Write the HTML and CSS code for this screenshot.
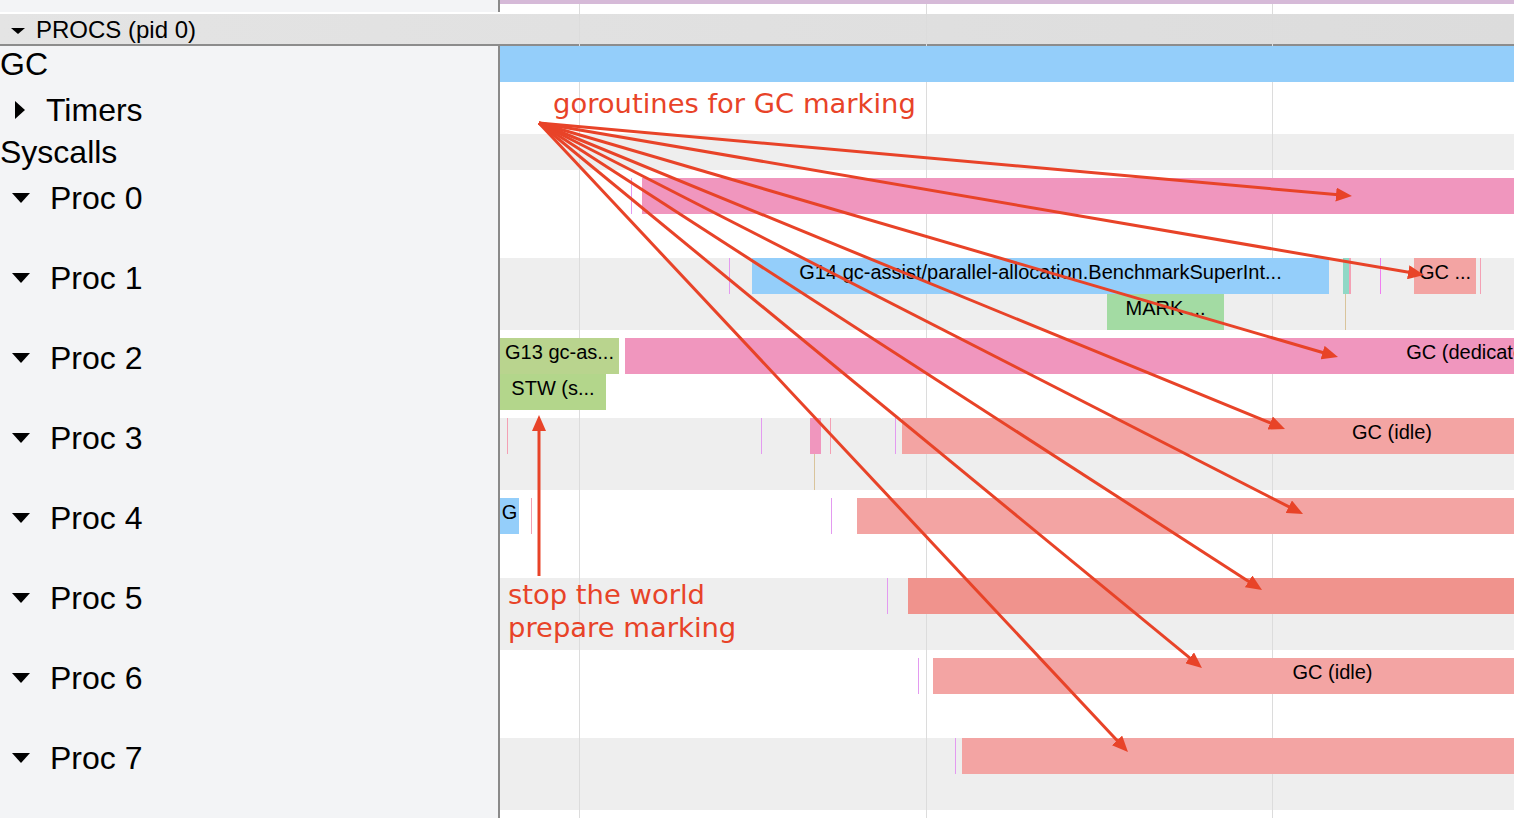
FILE: index.html
```html
<!DOCTYPE html>
<html>
<head>
<meta charset="utf-8">
<link rel="stylesheet" href="styles.css">
</head>
<body>
<div class="app">
  <div class="topstrip"><div class="ts-left"></div><div class="ts-right"></div></div>
  <div class="header"><span class="tri-hdr"></span><span class="hdr-text">PROCS (pid 0)</span></div>
  <div class="main">
    <div class="labels">
      <div class="lab lab-gc"><span class="txt">GC</span></div>
      <div class="lab lab-timers"><span class="tri-right"></span><span class="txt">Timers</span></div>
      <div class="lab lab-sys"><span class="txt">Syscalls</span></div>
      <div class="lab-proc"><div class="lab"><span class="tri-down"></span><span class="txt">Proc 0</span></div></div>
      <div class="lab-proc"><div class="lab"><span class="tri-down"></span><span class="txt">Proc 1</span></div></div>
      <div class="lab-proc"><div class="lab"><span class="tri-down"></span><span class="txt">Proc 2</span></div></div>
      <div class="lab-proc"><div class="lab"><span class="tri-down"></span><span class="txt">Proc 3</span></div></div>
      <div class="lab-proc"><div class="lab"><span class="tri-down"></span><span class="txt">Proc 4</span></div></div>
      <div class="lab-proc"><div class="lab"><span class="tri-down"></span><span class="txt">Proc 5</span></div></div>
      <div class="lab-proc"><div class="lab"><span class="tri-down"></span><span class="txt">Proc 6</span></div></div>
      <div class="lab-proc"><div class="lab"><span class="tri-down"></span><span class="txt">Proc 7</span></div></div>
    </div>
    <div class="tracks">
      <div class="trk trk-gc"><div class="s blue" style="left:0;width:1014px"></div></div>
      <div class="trk trk-timers"></div>
      <div class="trk trk-sys"></div>

      <div class="proc"><div class="band">
        <div class="tick violet" style="left:131px"></div>
        <div class="s pink" style="left:142px;width:1000px"></div>
      </div></div>

      <div class="proc"><div class="band gray">
        <div class="tick violet" style="left:229px"></div>
        <div class="s blue" style="left:252px;width:577px">G14 gc-assist/parallel-allocation.BenchmarkSuperInt...</div>
        <div class="s teal" style="left:843px;width:6px"></div>
        <div class="tick pinkt w2" style="left:849px"></div>
        <div class="tick tan lo" style="left:845px"></div>
        <div class="tick magenta" style="left:880px"></div>
        <div class="s salmon" style="left:914px;width:62px">GC ...</div>
        <div class="tick pinkt" style="left:980px"></div>
        <div class="s green lo" style="left:607px;width:117px">MARK ...</div>
      </div></div>

      <div class="proc"><div class="band">
        <div class="s olive" style="left:0;width:119px">G13 gc-as...</div>
        <div class="s pink" style="left:125px;width:1698px">GC (dedicated)</div>
        <div class="s olive2 lo" style="left:0;width:106px">STW (s...</div>
      </div></div>

      <div class="proc"><div class="band gray">
        <div class="tick pinkt" style="left:7px"></div>
        <div class="tick violet" style="left:261px"></div>
        <div class="s pink" style="left:310px;width:11px"></div>
        <div class="tick tan lo" style="left:314px"></div>
        <div class="tick pinkt" style="left:330px"></div>
        <div class="tick violet" style="left:395px"></div>
        <div class="s salmon" style="left:402px;width:980px">GC (idle)</div>
      </div></div>

      <div class="proc"><div class="band">
        <div class="s blue" style="left:0;width:19px">G</div>
        <div class="tick pinkt" style="left:31px"></div>
        <div class="tick violet" style="left:331px"></div>
        <div class="s salmon" style="left:357px;width:1200px"></div>
      </div></div>

      <div class="proc"><div class="band gray">
        <div class="tick violet" style="left:387px"></div>
        <div class="s salmon2" style="left:408px;width:1200px"></div>
      </div></div>

      <div class="proc"><div class="band">
        <div class="tick violet" style="left:418px"></div>
        <div class="s salmon" style="left:433px;width:799px">GC (idle)</div>
      </div></div>

      <div class="proc"><div class="band gray">
        <div class="tick violet" style="left:455px"></div>
        <div class="s salmon" style="left:462px;width:1200px"></div>
      </div></div>
    </div>
  </div>

  <div class="grid"><i class="g1"></i><i class="g2"></i><i class="g3"></i></div>

  <svg class="arrows" width="1514" height="818" viewBox="0 0 1514 818">
    <defs>
      <marker id="ah" markerUnits="userSpaceOnUse" markerWidth="16" markerHeight="14" viewBox="0 0 16 14" refX="8" refY="7" orient="auto">
        <path d="M0,0 L16,7 L0,14 Z" fill="#e84328"/>
      </marker>
    </defs>
    <g stroke="#e84328" stroke-width="3" fill="none" marker-end="url(#ah)">
      <line x1="539" y1="123" x2="1344" y2="195.3"/>
      <line x1="539" y1="123" x2="1416.1" y2="273.6"/>
      <line x1="539" y1="123" x2="1330.3" y2="354.8"/>
      <line x1="539" y1="123" x2="1277.6" y2="426"/>
      <line x1="539" y1="123" x2="1295.9" y2="510.4"/>
      <line x1="539" y1="123" x2="1255.3" y2="585.7"/>
      <line x1="539" y1="123" x2="1195.8" y2="662.9"/>
      <line x1="539" y1="123" x2="1122.5" y2="746.2"/>
      <line x1="539" y1="576" x2="539" y2="423"/>
    </g>
  </svg>

  <div class="note note-gc">goroutines for GC marking</div>
  <div class="note note-stw">stop the world<br>prepare marking</div>
</div>
</body>
</html>
```

FILE: styles.css
```css
body {
  margin: 0;
  background: #ffffff;
  font-family: "Liberation Sans", Arial, Helvetica, sans-serif;
  color: #000;
}

.app {
  position: relative;
  width: 1514px;
  height: 818px;
  overflow: hidden;
}

.topstrip {
  display: flex;
  height: 12px;
  margin-bottom: 2px;
}
.ts-left {
  width: 498px;
  border-right: 2px solid #8a8a8a;
  background: #f3f4f6;
}
.ts-right {
  flex: 1;
  border-top: 4px solid #d6bad8;
  background: #ffffff;
}

.header {
  height: 30px;
  border-bottom: 2px solid #8c8c8c;
  background: linear-gradient(to right, #e4e4e4, #dcdcdc);
  display: flex;
  align-items: center;
  font-size: 24px;
}
.hdr-text {
  padding-top: 2px;
}
.tri-hdr {
  width: 0;
  height: 0;
  border-left: 7px solid transparent;
  border-right: 7px solid transparent;
  border-top: 6px solid #000;
  margin: 4px 11px 0 11px;
}

.main {
  display: flex;
  height: 772px;
}

.labels {
  width: 498px;
  border-right: 2px solid #8a8a8a;
  background: #f3f4f6;
  font-size: 32px;
}
.lab {
  display: flex;
  align-items: center;
  height: 36px;
}
.lab .txt {
  line-height: 36px;
  white-space: nowrap;
}
.lab-timers {
  height: 52px;
  padding-top: 3px;
  box-sizing: border-box;
}
.lab-proc .txt {
  padding-top: 3px;
}
.tri-right {
  width: 0;
  height: 0;
  border-top: 9px solid transparent;
  border-bottom: 9px solid transparent;
  border-left: 10px solid #000;
  margin: 0 21px 0 15px;
}
.lab-proc {
  height: 80px;
  padding-top: 8px;
  box-sizing: border-box;
}
.tri-down {
  width: 0;
  height: 0;
  border-left: 9px solid transparent;
  border-right: 9px solid transparent;
  border-top: 10px solid #000;
  margin: 4px 20px 0 12px;
}

.tracks {
  flex: 1;
  overflow: hidden;
}
.trk {
  position: relative;
}
.trk-gc { height: 36px; }
.trk-timers { height: 52px; }
.trk-sys { height: 36px; background: #eeeeee; }

.proc {
  padding-top: 8px;
}
.band {
  position: relative;
  height: 72px;
}
.band.gray {
  background: #eeeeee;
}

.s {
  position: absolute;
  top: 0;
  height: 36px;
  line-height: 28px;
  font-size: 20px;
  text-align: center;
  white-space: nowrap;
  overflow: hidden;
  z-index: 2;
}
.s.lo, .tick.lo { top: 36px; }

.blue { background: #94cefa; }
.pink { background: #f096be; }
.salmon { background: #f3a4a3; }
.salmon2 { background: #f0938d; }
.teal { background: #8fd8c6; }
.green { background: #a3dba3; }
.olive { background: #b9d48e; }
.olive2 { background: #b3d68b; }

.tick {
  position: absolute;
  top: 0;
  width: 1px;
  height: 36px;
  z-index: 2;
}
.tick.w2 { width: 2px; }
.violet { background: #e39af0; }
.magenta { background: #f07cf0; }
.pinkt { background: #f4a0b4; }
.tan { background: #d9c49b; }

.grid {
  position: absolute;
  left: 500px;
  top: 4px;
  width: 1014px;
  height: 814px;
  z-index: 1;
  pointer-events: none;
}
.grid i {
  position: absolute;
  top: 0;
  bottom: 0;
  width: 1px;
  background: #dcdcdc;
}
.g1 { left: 79px; }
.g2 { left: 426px; }
.g3 { left: 772px; }

.arrows {
  position: absolute;
  left: 0;
  top: 0;
  z-index: 3;
  pointer-events: none;
}

.note {
  position: absolute;
  z-index: 4;
  color: #e84328;
  font-family: "DejaVu Sans", Verdana, sans-serif;
  font-size: 27.4px;
  line-height: 33px;
  white-space: nowrap;
}
.note-gc { left: 553px; top: 87px; }
.note-stw { left: 508px; top: 578px; }
```
